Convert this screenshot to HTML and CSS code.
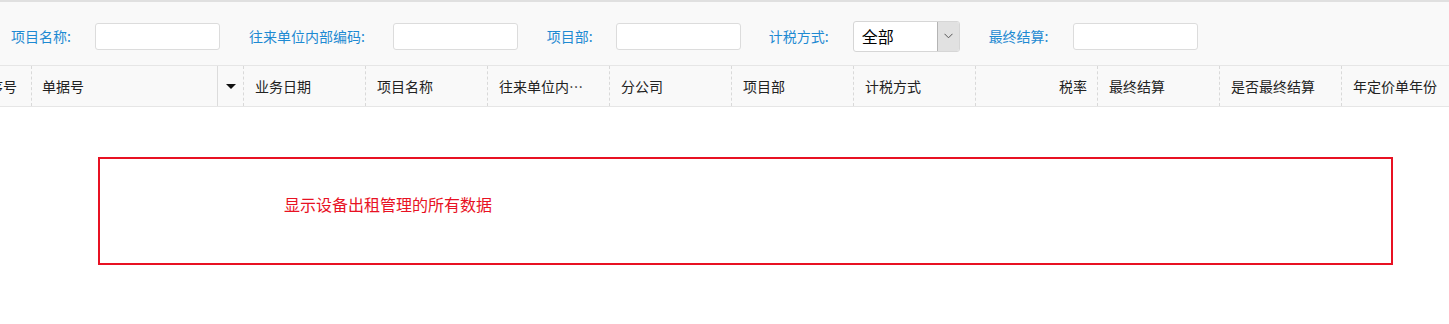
FILE: index.html
```html
<!DOCTYPE html>
<html lang="zh-CN">
<head>
  <meta charset="UTF-8">
  <title>设备出租管理</title>
  <link rel="stylesheet" href="styles.css">
</head>
<body>
  <div class="page">
    <div class="filter-bar">
      <div class="field">
        <label>项目名称:</label>
        <input type="text" class="text-input">
      </div>
      <div class="field field-wide">
        <label>往来单位内部编码:</label>
        <input type="text" class="text-input">
      </div>
      <div class="field field-short">
        <label>项目部:</label>
        <input type="text" class="text-input">
      </div>
      <div class="field field-select">
        <label>计税方式:</label>
        <div class="select">
          <span class="select-value">全部</span>
          <span class="select-arrow">
            <svg width="9" height="6" viewBox="0 0 9 6"><path d="M0.5 0.8 L4.5 4.8 L8.5 0.8" fill="none" stroke="#555" stroke-width="1"/></svg>
          </span>
        </div>
      </div>
      <div class="field">
        <label>最终结算:</label>
        <input type="text" class="text-input">
      </div>
    </div>

    <div class="grid-header">
      <div class="col col-index">序号</div>
      <div class="col col-bill">单据号</div>
      <div class="col col-menu"><span class="caret"></span></div>
      <div class="col">业务日期</div>
      <div class="col">项目名称</div>
      <div class="col">往来单位内部编码</div>
      <div class="col">分公司</div>
      <div class="col">项目部</div>
      <div class="col">计税方式</div>
      <div class="col col-right">税率</div>
      <div class="col">最终结算</div>
      <div class="col">是否最终结算</div>
      <div class="col">年定价单年份</div>
    </div>

    <div class="grid-body">
      <div class="note-box">显示设备出租管理的所有数据</div>
    </div>
  </div>
</body>
</html>
```

FILE: styles.css
```css
body {
  margin: 0;
  font-family: "Noto Sans CJK SC", "Noto Sans", sans-serif;
  font-size: 14px;
  color: #222;
  background: #fff;
  overflow: hidden;
}

.page {
  border-top: 2px solid #e0e0e0;
}

.filter-bar {
  display: flex;
  align-items: center;
  height: 58px;
  padding: 5px 0 0 11px;
  background: #f9f9f9;
}

.field {
  display: flex;
  align-items: center;
  margin-right: 29px;
}

.field label {
  color: #1e8ad2;
  margin-right: 24px;
  line-height: 20px;
}

.field-wide label {
  margin-right: 28px;
}

.field-short {
  margin-right: 28px;
}

.field-short label {
  margin-right: 23px;
}

.field-select label {
  margin-right: 24px;
}

.text-input {
  box-sizing: border-box;
  width: 125px;
  height: 27px;
  border: 1px solid #dcdcdc;
  border-radius: 3px;
  background: #fff;
  padding: 0 6px;
  font: inherit;
}

.select {
  box-sizing: border-box;
  display: flex;
  width: 107px;
  height: 31px;
  border: 1px solid #d6d6d6;
  border-radius: 3px;
  background: #fff;
}

.select-value {
  flex: 1;
  padding-left: 8px;
  font-size: 16px;
  line-height: 29px;
  color: #000;
}

.select-arrow {
  width: 21px;
  display: flex;
  align-items: center;
  justify-content: center;
  background: #e1e1e1;
  border-left: 1px solid #b4b4b4;
  border-radius: 0 2px 2px 0;
}

.grid-header {
  display: flex;
  height: 40px;
  border-top: 1px solid #e6e6e6;
  border-bottom: 1px solid #e6e6e6;
  background: #f9f9f9;
  white-space: nowrap;
}

.col {
  box-sizing: border-box;
  flex: none;
  width: 122px;
  padding: 0 18px 0 11px;
  line-height: 40px;
  border-left: 1px dashed #d9d9d9;
  overflow: hidden;
  text-overflow: ellipsis;
}

.col-index {
  width: 52px;
  margin-left: -21px;
  padding: 0 10px;
  border-left: none;
  text-overflow: clip;
}

.col-bill {
  width: 186px;
  padding-left: 10px;
}

.col-menu {
  width: 26px;
  padding: 0;
  border-left: 1px solid #dcdcdc;
  display: flex;
  align-items: center;
  justify-content: center;
}

.caret {
  width: 0;
  height: 0;
  border-left: 5px solid transparent;
  border-right: 5px solid transparent;
  border-top: 5px solid #111;
}

.col-right {
  text-align: right;
  padding-right: 10px;
}

.grid-body {
  padding: 50px 0 0 98px;
}

.note-box {
  box-sizing: border-box;
  width: 1295px;
  height: 108px;
  border: 2px solid #e81123;
  padding: 34px 0 0 184px;
  font-size: 16px;
  line-height: 22px;
  color: #e81123;
}
```
